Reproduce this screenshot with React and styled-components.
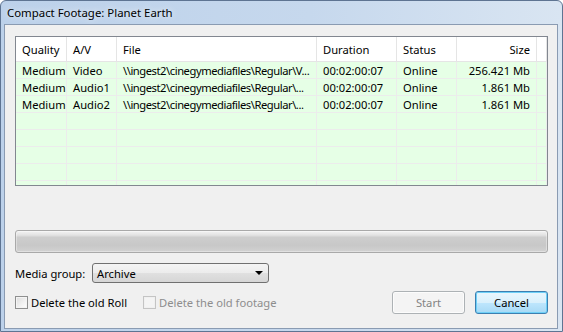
import React from "react";
import styled, { createGlobalStyle } from "styled-components";

const Global = createGlobalStyle`
  html, body {
    margin: 0;
    padding: 0;
    background: #ffffff;
  }
  * {
    box-sizing: border-box;
  }
`;

const Window = styled.div`
  width: 563px;
  height: 332px;
  display: flex;
  flex-direction: column;
  background: linear-gradient(90deg, #bcd1ea 0%, #c6d8ed 55%, #d9e5f2 100%);
  border: 1px solid #5e7492;
  border-radius: 6px 6px 0 0;
  font-family: "Noto Sans", "Open Sans", sans-serif;
  font-size: 11.2px;
  color: #000;
  overflow: hidden;
`;

const TitleBar = styled.div`
  height: 23px;
  display: flex;
  align-items: center;
  padding-left: 6px;
  font-size: 11.4px;
  color: #000;
  text-shadow: 0 0 6px rgba(255, 255, 255, 0.9);
`;

const Client = styled.div`
  flex: 1;
  margin: 0 4px 2px 3px;
  background: #f0f0f0;
  border: 1px solid #8a9bb2;
  padding: 11px 9px 0 10px;
  display: flex;
  flex-direction: column;
`;

const ListBox = styled.div`
  height: 150px;
  border: 1px solid #828790;
  background: #e6ffe6;
  overflow: hidden;
`;

const Grid = styled.div`
  display: grid;
  grid-template-columns: 51px 50px 200px 80px 60px 80px 1fr;
`;

const HeadCell = styled.div`
  height: 25px;
  background: #ffffff;
  border-right: 1px solid #e5e5e5;
  border-bottom: 1px solid #e5e5e5;
  display: flex;
  align-items: center;
  justify-content: ${(p) => (p.$right ? "flex-end" : "flex-start")};
  padding: 0 ${(p) => (p.$right ? "6px" : "0")} 0 ${(p) => (p.$right ? "0" : "6px")};
  white-space: nowrap;
`;

const Cell = styled.div`
  height: 17px;
  padding-top: 1px;
  border-right: 1px solid #ececec;
  border-bottom: 1px solid #ececec;
  display: flex;
  align-items: center;
  justify-content: ${(p) => (p.$right ? "flex-end" : "flex-start")};
  padding-left: ${(p) => (p.$right ? "0" : "6px")};
  padding-right: ${(p) => (p.$right ? "6px" : "0")};
  letter-spacing: ${(p) => (p.$tight ? "-0.45px" : "normal")};
  white-space: nowrap;
  overflow: hidden;
`;

const Progress = styled.div`
  margin-top: 44px;
  height: 23px;
  border: 1px solid #a9a9a9;
  border-radius: 3px;
  background: linear-gradient(
    180deg,
    #f3f3f3 0%,
    #e2e2e2 20%,
    #cdcdcd 30%,
    #c8c8c8 70%,
    #d2d2d2 100%
  );
  box-shadow: inset 0 0 0 1px rgba(255, 255, 255, 0.35);
`;

const GroupRow = styled.div`
  margin-top: 10px;
  display: flex;
  align-items: center;
  height: 20px;
`;

const Label = styled.span`
  width: 77px;
`;

const Select = styled.div`
  width: 177px;
  height: 20px;
  border: 1px solid #707070;
  border-radius: 3px;
  background: linear-gradient(180deg, #f4f4f4 0%, #ececec 50%, #e0e0e0 51%, #d6d6d6 100%);
  display: flex;
  align-items: center;
  justify-content: space-between;
  padding: 0 5px 0 4px;
`;

const Arrow = styled.span`
  width: 0;
  height: 0;
  border-left: 4px solid transparent;
  border-right: 4px solid transparent;
  border-top: 4px solid #000;
`;

const BottomRow = styled.div`
  margin-top: 8px;
  display: flex;
  align-items: center;
  height: 23px;
`;

const Check = styled.label`
  display: flex;
  align-items: center;
  gap: 3px;
  margin-right: 16px;
  color: ${(p) => (p.$disabled ? "#8d8d8d" : "#000")};
  white-space: nowrap;
`;

const Box = styled.span`
  width: 13px;
  height: 13px;
  border: 1px solid ${(p) => (p.$disabled ? "#c4c4c4" : "#8e8f8f")};
  background: ${(p) =>
    p.$disabled
      ? "#f4f4f4"
      : "linear-gradient(135deg, #dcdcdc 0%, #f2f2f2 60%, #ffffff 100%)"};
  box-shadow: inset 0 0 0 1px ${(p) => (p.$disabled ? "#f0f0f0" : "#f4f4f4")};
`;

const Spacer = styled.div`
  flex: 1;
`;

const Button = styled.button`
  width: 73px;
  height: 23px;
  margin-left: ${(p) => (p.$gap ? "10px" : "0")};
  border-radius: 3px;
  font: inherit;
  padding: 0;
  color: ${(p) => (p.$disabled ? "#838383" : "#000")};
  border: 1px solid ${(p) => (p.$primary ? "#3c7fb1" : "#adb2b5")};
  background: ${(p) =>
    p.$primary
      ? "linear-gradient(180deg, #eaf6fd 0%, #d9f0fc 50%, #bee6fd 51%, #a7d9f5 100%)"
      : "#f4f4f4"};
  box-shadow: ${(p) =>
    p.$primary ? "inset 0 0 0 1px #6fd0f7" : "inset 0 0 0 1px #fcfcfc"};
`;

const header = ["Quality", "A/V", "File", "Duration", "Status", "Size", ""];

const rows = [
  ["Medium", "Video", "\\\\ingest2\\cinegymediafiles\\Regular\\V...", "00:02:00:07", "Online", "256.421 Mb"],
  ["Medium", "Audio1", "\\\\ingest2\\cinegymediafiles\\Regular\\...", "00:02:00:07", "Online", "1.861 Mb"],
  ["Medium", "Audio2", "\\\\ingest2\\cinegymediafiles\\Regular\\...", "00:02:00:07", "Online", "1.861 Mb"],
  ["", "", "", "", "", ""],
  ["", "", "", "", "", ""],
  ["", "", "", "", "", ""],
  ["", "", "", "", "", ""],
  ["", "", "", "", "", ""],
];

export default function App() {
  return (
    <>
      <Global />
      <Window>
        <TitleBar>Compact Footage: Planet Earth</TitleBar>
        <Client>
          <ListBox>
            <Grid>
              {header.map((h, i) => (
                <HeadCell key={i} $right={i === 5}>
                  {h}
                </HeadCell>
              ))}
              {rows.map((r, ri) =>
                [...r, ""].map((c, ci) => (
                  <Cell key={ri + "-" + ci} $right={ci === 5} $tight={ci === 2}>
                    {c}
                  </Cell>
                ))
              )}
            </Grid>
          </ListBox>
          <Progress />
          <GroupRow>
            <Label>Media group:</Label>
            <Select>
              <span>Archive</span>
              <Arrow />
            </Select>
          </GroupRow>
          <BottomRow>
            <Check>
              <Box />
              Delete the old Roll
            </Check>
            <Check $disabled>
              <Box $disabled />
              Delete the old footage
            </Check>
            <Spacer />
            <Button $disabled>Start</Button>
            <Button $primary $gap>
              Cancel
            </Button>
          </BottomRow>
        </Client>
      </Window>
    </>
  );
}
